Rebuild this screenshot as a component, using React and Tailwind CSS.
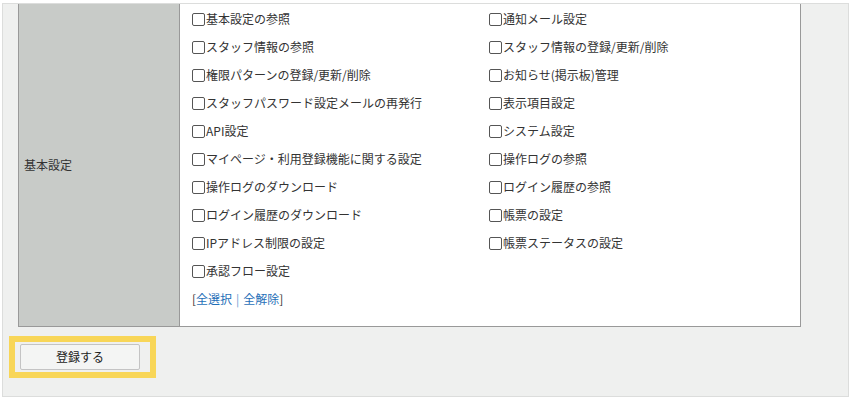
import React from "react";

const left = [
  "基本設定の参照",
  "スタッフ情報の参照",
  "権限パターンの登録/更新/削除",
  "スタッフパスワード設定メールの再発行",
  "API設定",
  "マイページ・利用登録機能に関する設定",
  "操作ログのダウンロード",
  "ログイン履歴のダウンロード",
  "IPアドレス制限の設定",
  "承認フロー設定",
];
const right = [
  "通知メール設定",
  "スタッフ情報の登録/更新/削除",
  "お知らせ(掲示板)管理",
  "表示項目設定",
  "システム設定",
  "操作ログの参照",
  "ログイン履歴の参照",
  "帳票の設定",
  "帳票ステータスの設定",
];

function Item({ label }) {
  return (
    <label className="flex h-[28px] items-center text-[12px] text-[#333333]">
      <span className="mr-[1px] inline-block h-[13px] w-[13px] shrink-0 rounded-[2px] border border-[#555555] bg-white" />
      <span>{label}</span>
    </label>
  );
}

export default function App() {
  const rows = [];
  for (let i = 0; i < left.length; i++) {
    rows.push(<Item key={"l" + i} label={left[i]} />);
    rows.push(right[i] ? <Item key={"r" + i} label={right[i]} /> : <div key={"r" + i} />);
  }
  return (
    <div
      className="bg-white pl-[2px] pt-[3px] w-[852px] h-[402px]"
      style={{ fontFamily: '"Noto Sans CJK JP", "Noto Sans", sans-serif' }}
    >
      <div className="w-[847px] h-[394px] border border-[#dcdddc] bg-[#eff0ef] pl-[15px] pb-[18px]">
        <div className="flex w-[783px] border-b border-l border-[#999999]">
          <div className="flex w-[161px] items-center border-r border-[#999999] bg-[#c8cbc8] pl-[5px] text-[12px] text-[#333333]">
            基本設定
          </div>
          <div className="w-[621px] border-r border-[#999999] bg-white px-[12px] pt-[1px] pb-[13px]">
            <div className="grid grid-cols-[297px_1fr]">{rows}</div>
            <div className="flex h-[28px] items-center text-[12px] text-[#333333]">
              <span>[</span>
              <span className="text-[#1f6fb8]">全選択</span>
              <span className="mx-[4px] text-[#6a9ed0]">|</span>
              <span className="text-[#1f6fb8]">全解除</span>
              <span>]</span>
            </div>
          </div>
        </div>
        <div className="ml-[-9px] mt-[9px] inline-block border-[6px] border-[#f8d658] pl-[5px] pr-[10px] pt-[1px] pb-[2px]">
          <button className="h-[26px] w-[120px] rounded-[2px] border border-[#c4c4c4] bg-[#f4f5f4] text-[12px] text-[#222222]">
            登録する
          </button>
        </div>
      </div>
    </div>
  );
}
